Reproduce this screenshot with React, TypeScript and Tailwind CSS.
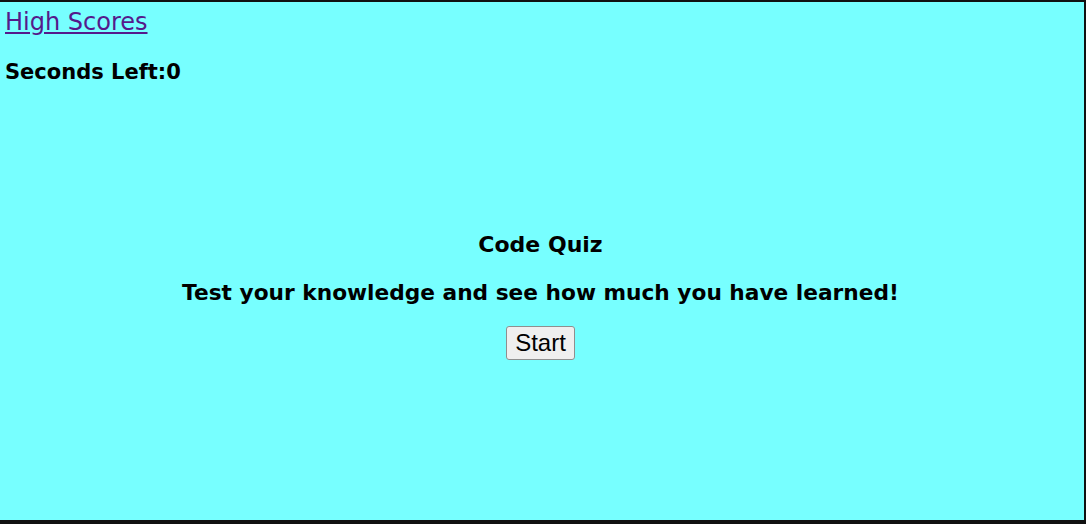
export default function App() {
  return (
    <div className="h-[524px] w-[1086px] bg-[#111111] pt-[2px] pr-[2px] pb-[4px]">
      <div className="flex h-full w-full flex-col bg-[#77ffff] font-['DejaVu_Sans',Verdana,sans-serif] text-black">
        <a href="#" className="ml-[5px] mt-[5px] text-[24px] leading-[30px] text-[#551a8b] underline">
          High Scores
        </a>
        <h3 className="ml-[5px] mt-[22px] text-[21px] font-bold leading-[26px]">Seconds Left:0</h3>
        <div className="mt-[146px] flex flex-col items-center pr-[3px]">
          <h2 className="text-[22px] font-bold leading-[28px]">Code Quiz</h2>
          <p className="mt-[20px] text-[21.7px] font-bold leading-[28px]">
            Test your knowledge and see how much you have learned!
          </p>
          <button className="mt-[19px] h-[34px] w-[69px] rounded-[3px] border border-[#8f8f8f] bg-[#efefef] font-['Liberation_Sans',Arial,sans-serif] text-[24px] leading-none">
            Start
          </button>
        </div>
      </div>
    </div>
  );
}
